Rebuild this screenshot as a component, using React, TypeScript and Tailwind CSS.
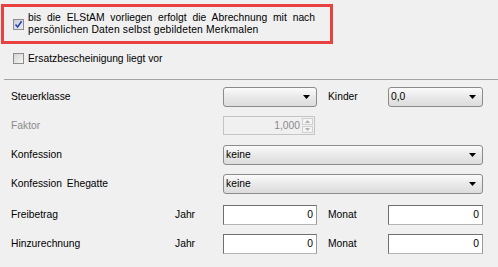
import React from "react";

function Checkbox({ checked }: { checked?: boolean }) {
  return (
    <div
      className={
        "w-[11px] h-[11px] shrink-0 border border-[#8c8c8c] flex items-center justify-center " +
        (checked
          ? "bg-[linear-gradient(135deg,#c9cbdc,#eceef6)]"
          : "bg-[linear-gradient(135deg,#d4d4d4,#f7f7f7)]")
      }
    >
      {checked && (
        <svg width="9" height="9" viewBox="0 0 9 9">
          <path d="M1.5 4.5 L3.6 7 L7.6 1.2" fill="none" stroke="#2a3fb0" strokeWidth="1.5" />
        </svg>
      )}
    </div>
  );
}

function Arrow() {
  return (
    <svg width="7" height="4" viewBox="0 0 7 4" className="shrink-0">
      <path d="M0 0 H7 L3.5 4 Z" fill="#000" />
    </svg>
  );
}

function Select({ w, h, value }: { w: string; h: string; value?: string }) {
  return (
    <div
      className={
        w +
        " " +
        h +
        " shrink-0 rounded-[3px] border border-[#8b8b8b] bg-[linear-gradient(#fbfbfb,#e9e9e9_50%,#dcdcdc)] flex items-center justify-between pl-[2px] pr-[6px]"
      }
    >
      <span>{value ?? ""}</span>
      <Arrow />
    </div>
  );
}

function NumInput({ w, value }: { w: string; value: string }) {
  return (
    <div
      className={
        w +
        " h-[20px] shrink-0 bg-white border border-t-[#707070] border-l-[#707070] border-r-[#9a9a9a] border-b-[#b5b5b5] flex items-center justify-end pr-[3px]"
      }
    >
      {value}
    </div>
  );
}

function Row({ children, extra }: { children: React.ReactNode; extra?: string }) {
  return <div className={"flex items-center h-[29px] pl-[11px] " + (extra ?? "")}>{children}</div>;
}

export default function App() {
  return (
    <div className="w-[498px] h-[267px] bg-[#f0f0f0] font-['Liberation_Sans',Arial,sans-serif] text-[10.3px] leading-[13px] text-black overflow-hidden">
      <div className="ml-[1px] mt-[4px] w-[332px] h-[40px] border-[3px] border-[#e8413f] flex items-center pl-[9px]">
        <Checkbox checked />
        <div className="ml-[4px] w-[287px] leading-[12.5px]">
          <div className="text-justify [text-align-last:justify]">
            bis die ELStAM vorliegen erfolgt die Abrechnung mit nach
          </div>
          <div className="tracking-[0.17px]">persönlichen Daten selbst gebildeten Merkmalen</div>
        </div>
      </div>

      <div className="mt-[8px] h-[13px] flex items-center pl-[13px]">
        <Checkbox />
        <span className="ml-[4px]">Ersatzbescheinigung liegt vor</span>
      </div>

      <div className="mt-[14px] ml-[4px] h-px bg-[#a3a3a3]" />

      <div className="mt-[2px]">
        <Row>
          <span className="w-[212px] shrink-0">Steuerklasse</span>
          <Select w="w-[94px]" h="h-[20px]" />
          <span className="ml-[11px] w-[60px] shrink-0">Kinder</span>
          <Select w="w-[95px]" h="h-[20px]" value="0,0" />
        </Row>
        <Row>
          <span className="w-[212px] shrink-0 text-[#8a8a8a]">Faktor</span>
          <div className="w-[92px] h-[19px] shrink-0 border border-[#c4c4c4] bg-[#f0f0f0] flex items-center justify-end pr-[1px]">
            <span className="text-[#8a8a8a] mr-[2px]">1,000</span>
            <div className="w-[11px] h-[15px] flex flex-col gap-px">
              <div className="flex-1 border border-[#d0d0d0] bg-[#f4f4f4] flex items-center justify-center">
                <svg width="5" height="3" viewBox="0 0 5 3">
                  <path d="M0 3 H5 L2.5 0 Z" fill="#b0b0b0" />
                </svg>
              </div>
              <div className="flex-1 border border-[#d0d0d0] bg-[#f4f4f4] flex items-center justify-center">
                <svg width="5" height="3" viewBox="0 0 5 3">
                  <path d="M0 0 H5 L2.5 3 Z" fill="#b0b0b0" />
                </svg>
              </div>
            </div>
          </div>
        </Row>
        <Row>
          <span className="w-[212px] shrink-0">Konfession</span>
          <Select w="w-[260px]" h="h-[20px]" value="keine" />
        </Row>
        <Row>
          <span className="w-[212px] shrink-0 [word-spacing:2px]">Konfession Ehegatte</span>
          <Select w="w-[260px]" h="h-[20px]" value="keine" />
        </Row>
        <Row extra="mt-[2px]">
          <span className="w-[164px] shrink-0">Freibetrag</span>
          <span className="w-[48px] shrink-0">Jahr</span>
          <NumInput w="w-[94px]" value="0" />
          <span className="ml-[11px] w-[60px] shrink-0">Monat</span>
          <NumInput w="w-[95px]" value="0" />
        </Row>
        <Row>
          <span className="w-[164px] shrink-0">Hinzurechnung</span>
          <span className="w-[48px] shrink-0">Jahr</span>
          <NumInput w="w-[94px]" value="0" />
          <span className="ml-[11px] w-[60px] shrink-0">Monat</span>
          <NumInput w="w-[95px]" value="0" />
        </Row>
      </div>
    </div>
  );
}
